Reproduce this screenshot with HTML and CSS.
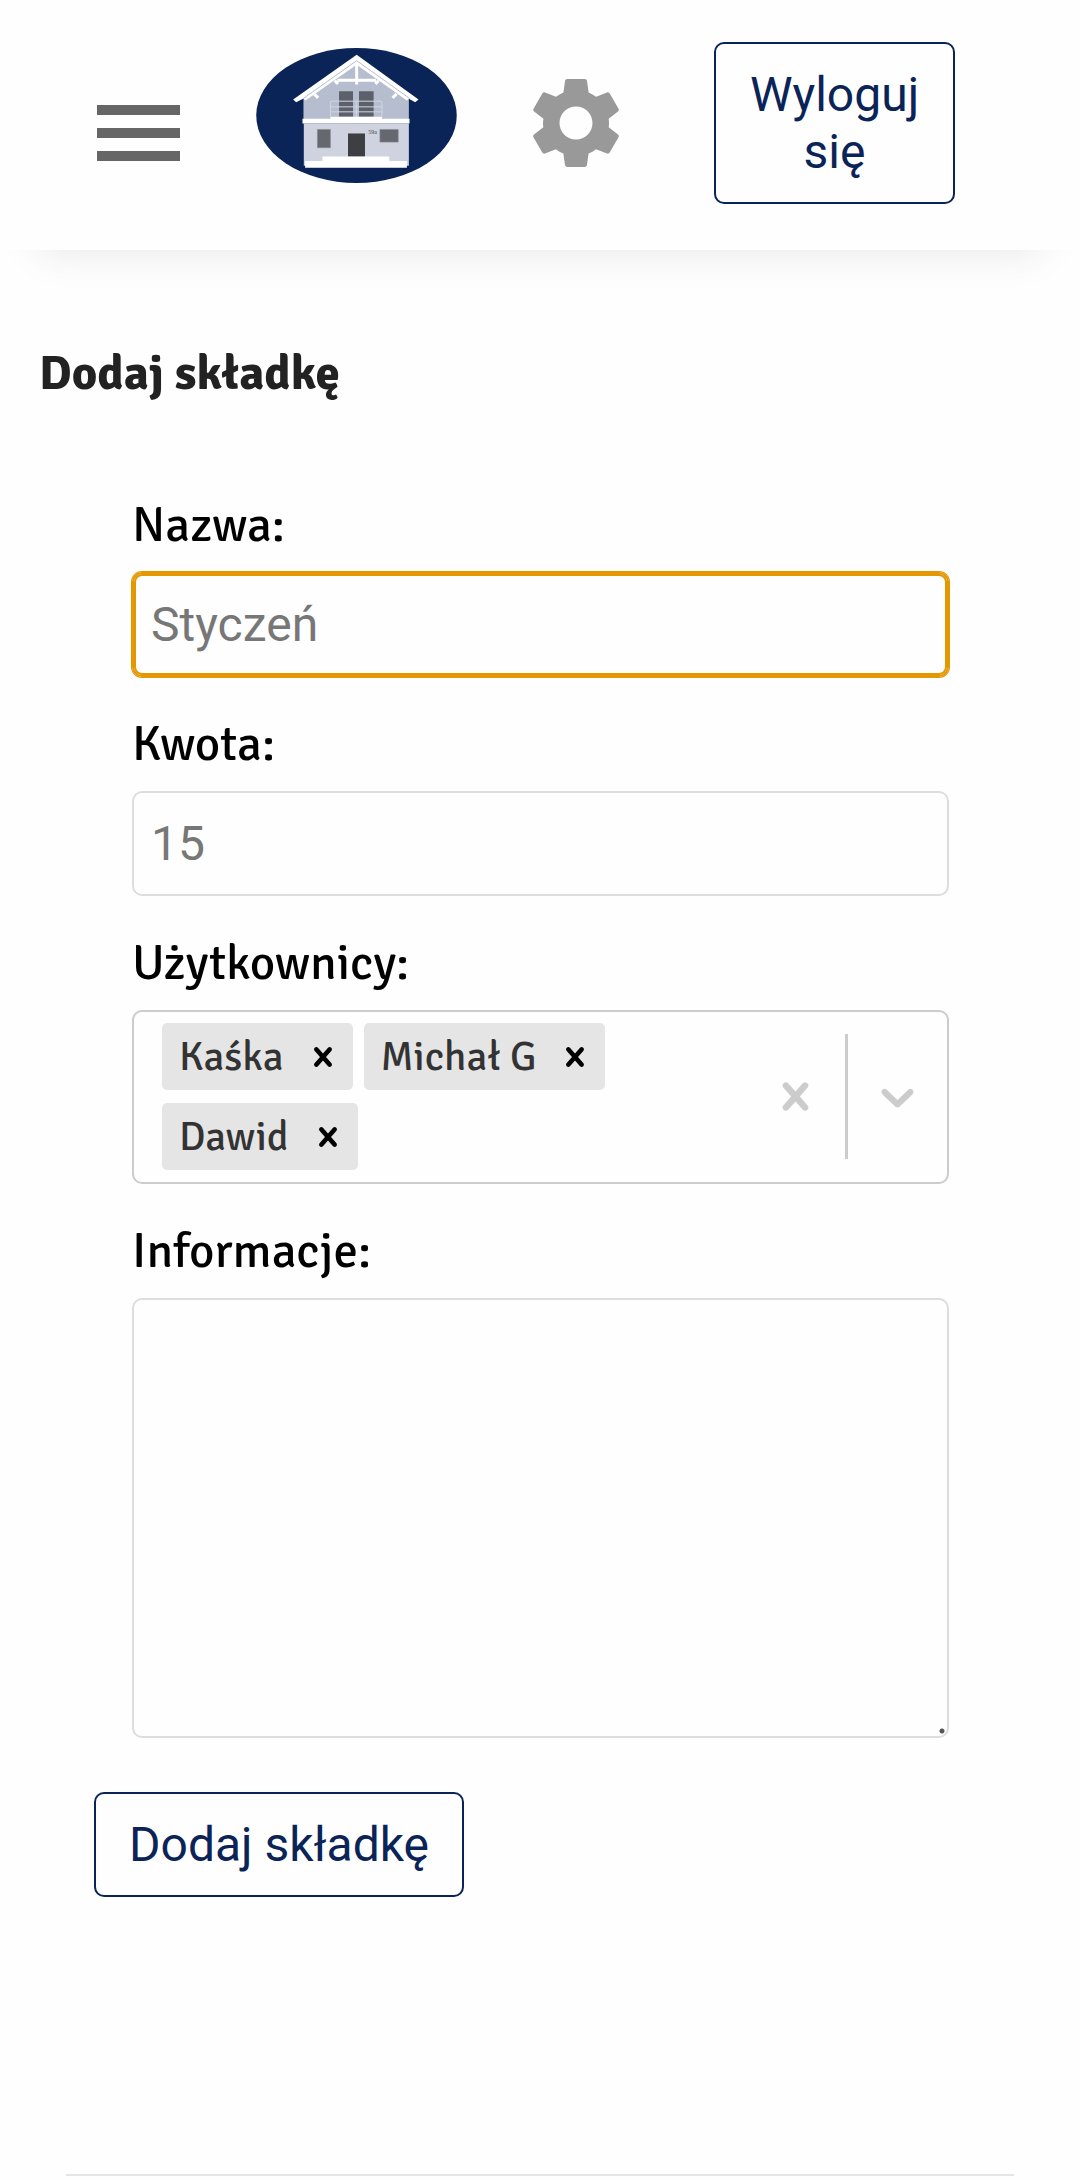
FILE: index.html
```html
<!DOCTYPE html>
<html lang="pl">
<head>
<meta charset="utf-8">
<meta name="viewport" content="width=device-width, initial-scale=1">
<title>Dodaj składkę</title>
<link rel="stylesheet" href="styles.css">
</head>
<body>
<header class="topbar">
  <button class="icon-button menu" type="button" aria-label="Menu">
    <svg width="83" height="56" viewBox="0 0 83 56" fill="#666"><path d="M0 0h83v10H0zM0 23h83v10H0zM0 46h83v10H0z"/></svg>
  </button>
  <a class="logo" href="#" aria-label="Strona główna">
    <svg width="201" height="135" viewBox="48 52 603 406">
      <ellipse cx="349.500" cy="255" rx="301.500" ry="203" fill="#0a2457"/>
      <path d="M190 204 350 92l157 112v62H190z" fill="#b5bdcf"/>
      <path d="M191 279h316v127H191z" fill="#cfd3df"/>
      <path d="M350 72 536 207l-10 8-19-10-6 5L350 102 196 210l-6-6-22 11-9-8z" fill="#fff"/>
      <path d="M350 90 188 205M350 90 511 205" fill="none" stroke="#b5bdcf" stroke-width="3"/>
      <path d="M350 100v62M292 149h116M284 150l10 10M416 150l-10 10M222 190l12 12M470 190l-12 12" fill="none" stroke="#fff" stroke-width="9"/>
      <path d="M297 182h42v77h-42zM357 182h44v77h-44z" fill="#5c606b"/>
      <path d="M271 259v-42q0-5 5-5h145q5 0 5 5v42M271 229h155M271 244h155M349 212v47" fill="none" stroke="#d3d7e1" stroke-width="3"/>
      <path d="M187 265h84v-6h155v6h83v14H187z" fill="#fff"/>
      <path d="M232 297h39v55h-39zM420 297h55v38h-55z" fill="#65686e" stroke="#888b94" stroke-width="2"/>
      <path d="M324 309h51v70h-51z" fill="#3e3f43"/>
      <text x="385" y="311" class="house-number">59a</text>
      <path d="M195 392h52v-14h201v14h53v20H195z" fill="#fff"/>
    </svg>
  </a>
  <button class="icon-button settings" type="button" aria-label="Ustawienia">
    <svg width="110" height="110" viewBox="0 0 24 24" fill="#999"><path d="M19.140 12.940c.04-.3.06-.61.06-.94 0-.32-.02-.64-.07-.94l2.030-1.580c.18-.14.23-.41.12-.61l-1.920-3.320c-.12-.22-.37-.29-.59-.22l-2.390.96c-.5-.38-1.030-.7-1.620-.94L14.400 2.810c-.04-.24-.24-.41-.48-.41h-3.840c-.24 0-.43.17-.47.41L9.250 5.350C8.660 5.590 8.120 5.920 7.630 6.290L5.240 5.330c-.22-.08-.47 0-.59.22L2.740 8.870c-.12.21-.08.47.12.61l2.030 1.580C4.840 11.360 4.800 11.690 4.800 12s.02.64.07.94l-2.030 1.580c-.18.14-.23.41-.12.61l1.920 3.320c.12.22.37.29.59.22l2.390-.96c.5.38 1.030.7 1.620.94l.36 2.540c.05.24.24.41.48.41h3.840c.24 0 .44-.17.47-.41l.36-2.540c.59-.24 1.130-.56 1.620-.94l2.390.96c.22.08.47 0 .59-.22l1.920-3.320c.12-.22.07-.47-.12-.61zM12 15.600c-1.980 0-3.600-1.620-3.600-3.600s1.620-3.600 3.600-3.600 3.600 1.620 3.600 3.600-1.620 3.600-3.600 3.600z"/></svg>
  </button>
  <button class="button logout" type="button">Wyloguj się</button>
</header>

<main class="content">
  <h1 class="title">Dodaj składkę</h1>
  <form class="form">
    <div class="field">
      <label class="label" for="name">Nazwa:</label>
      <input class="input input-active" id="name" type="text" placeholder="Styczeń">
    </div>
    <div class="field">
      <label class="label" for="amount">Kwota:</label>
      <input class="input" id="amount" type="text" inputmode="numeric" placeholder="15">
    </div>
    <div class="field">
      <label class="label" for="users">Użytkownicy:</label>
      <div class="select">
        <div class="tags">
          <span class="tag">Kaśka<button class="icon-button" type="button" aria-label="Usuń Kaśka"><svg width="38" height="38" viewBox="0 0 20 20"><use href="#cross"/></svg></button></span>
          <span class="tag">Michał G<button class="icon-button" type="button" aria-label="Usuń Michał G"><svg width="38" height="38" viewBox="0 0 20 20"><use href="#cross"/></svg></button></span>
          <span class="tag">Dawid<button class="icon-button" type="button" aria-label="Usuń Dawid"><svg width="38" height="38" viewBox="0 0 20 20"><use href="#cross"/></svg></button></span>
          <input class="tag-input" id="users" type="text" role="combobox" aria-expanded="false">
        </div>
        <button class="icon-button indicator" type="button" aria-label="Wyczyść"><svg width="55" height="55" viewBox="0 0 20 20"><path id="cross" d="M14.348 14.849c-.469.469-1.229.469-1.697 0l-2.651-3.030-2.651 3.029c-.469.469-1.229.469-1.697 0-.469-.469-.469-1.229 0-1.697l2.758-3.150-2.759-3.152c-.469-.469-.469-1.228 0-1.697s1.228-.469 1.697 0l2.652 3.031 2.651-3.031c.469-.469 1.228-.469 1.697 0s.469 1.229 0 1.697l-2.758 3.152 2.758 3.150c.469.469.469 1.229 0 1.698z"/></svg></button>
        <span class="separator"></span>
        <button class="icon-button indicator" type="button" aria-label="Rozwiń"><svg width="55" height="55" viewBox="0 0 20 20"><path d="M4.516 7.548c.436-.446 1.043-.481 1.576 0l3.908 3.747 3.908-3.747c.533-.481 1.141-.446 1.574 0 .436.445.408 1.197 0 1.615-.406.418-4.695 4.502-4.695 4.502-.217.223-.502.335-.787.335s-.57-.112-.789-.335c0 0-4.287-4.084-4.695-4.502s-.436-1.170 0-1.615z"/></svg></button>
      </div>
    </div>
    <div class="field">
      <label class="label" for="info">Informacje:</label>
      <textarea class="input textarea" id="info"></textarea>
    </div>
    <button class="button submit" type="submit">Dodaj składkę</button>
  </form>
  <hr class="divider">
</main>
</body>
</html>
```

FILE: styles.css
```css
* {
  box-sizing: border-box;
}

body {
  margin: 0;
  background: #fefefe;
  color: #000;
  font-family: Signika, Lato, sans-serif;
  font-size: 49px;
  line-height: 58px;
}

svg {
  display: block;
}

.topbar {
  display: flex;
  align-items: center;
  height: 250px;
  padding: 0 125px 4px 97px;
  background: #fefefe;
  box-shadow: 0 36px 44px -40px rgba(0, 0, 0, 0.12);
}

.icon-button {
  flex: none;
  padding: 0;
  border: 0;
  background: none;
  color: inherit;
}

.menu {
  padding-top: 20px;
}

.logo {
  flex: none;
  margin: 0 64px 16px 76px;
}

.house-number {
  font: 18px "Liberation Serif", serif;
  fill: #444;
}

.button {
  padding: 22px 33px;
  border: 2px solid #0a2457;
  border-radius: 10px;
  background: none;
  color: #0a2457;
  font: 48px/57px Roboto, sans-serif;
}

.logout {
  width: 241px;
  margin-left: auto;
}

.content {
  padding: 94px 39px 0;
}

.title {
  margin: 0;
  color: #222;
  font-size: 49px;
  line-height: 58px;
  font-weight: 700;
}

.form {
  display: flex;
  flex-direction: column;
  gap: 38px;
  padding: 94px 92px 0 93px;
}

.field {
  display: flex;
  flex-direction: column;
  gap: 18px;
}

.input {
  width: 100%;
  height: 105px;
  padding: 0 17px;
  border: 2px solid #ddd;
  border-radius: 10px;
  outline: 0;
  background: none;
  font: 48px/57px Roboto, sans-serif;
}

.input::placeholder {
  color: #777;
}

.input-active {
  border-color: #e59700;
  box-shadow: 0 0 0 1px #e59700, inset 0 0 0 2px #e59700;
}

.textarea {
  display: block;
  height: 440px;
  padding: 17px;
  resize: vertical;
}

.textarea::-webkit-resizer {
  background: radial-gradient(circle at 10px 10px, #555 2px, transparent 3px);
}

.select {
  display: flex;
  align-items: center;
  padding: 11px 22px 12px 28px;
  border: 2px solid #ccc;
  border-radius: 10px;
}

.tags {
  display: flex;
  flex: 1;
  flex-wrap: wrap;
  gap: 13px 11px;
}

.tag {
  display: flex;
  align-items: center;
  gap: 20px;
  height: 67px;
  padding: 0 11px 0 17px;
  border-radius: 5px;
  background: #e5e5e5;
  color: #333;
  font-size: 41px;
}

.tag .icon-button {
  color: #000;
}

.tag-input {
  width: 40px;
  padding: 0;
  border: 0;
  outline: 0;
  background: none;
}

.indicator svg {
  fill: #ccc;
}

.separator {
  align-self: stretch;
  width: 3px;
  margin: 11px 22px;
  background: #ccc;
}

.submit {
  align-self: flex-start;
  margin: 16px 0 0 -38px;
}

.divider {
  height: 2px;
  margin: 277px 27px 0;
  border: 0;
  background: #e5e5e5;
}
```
